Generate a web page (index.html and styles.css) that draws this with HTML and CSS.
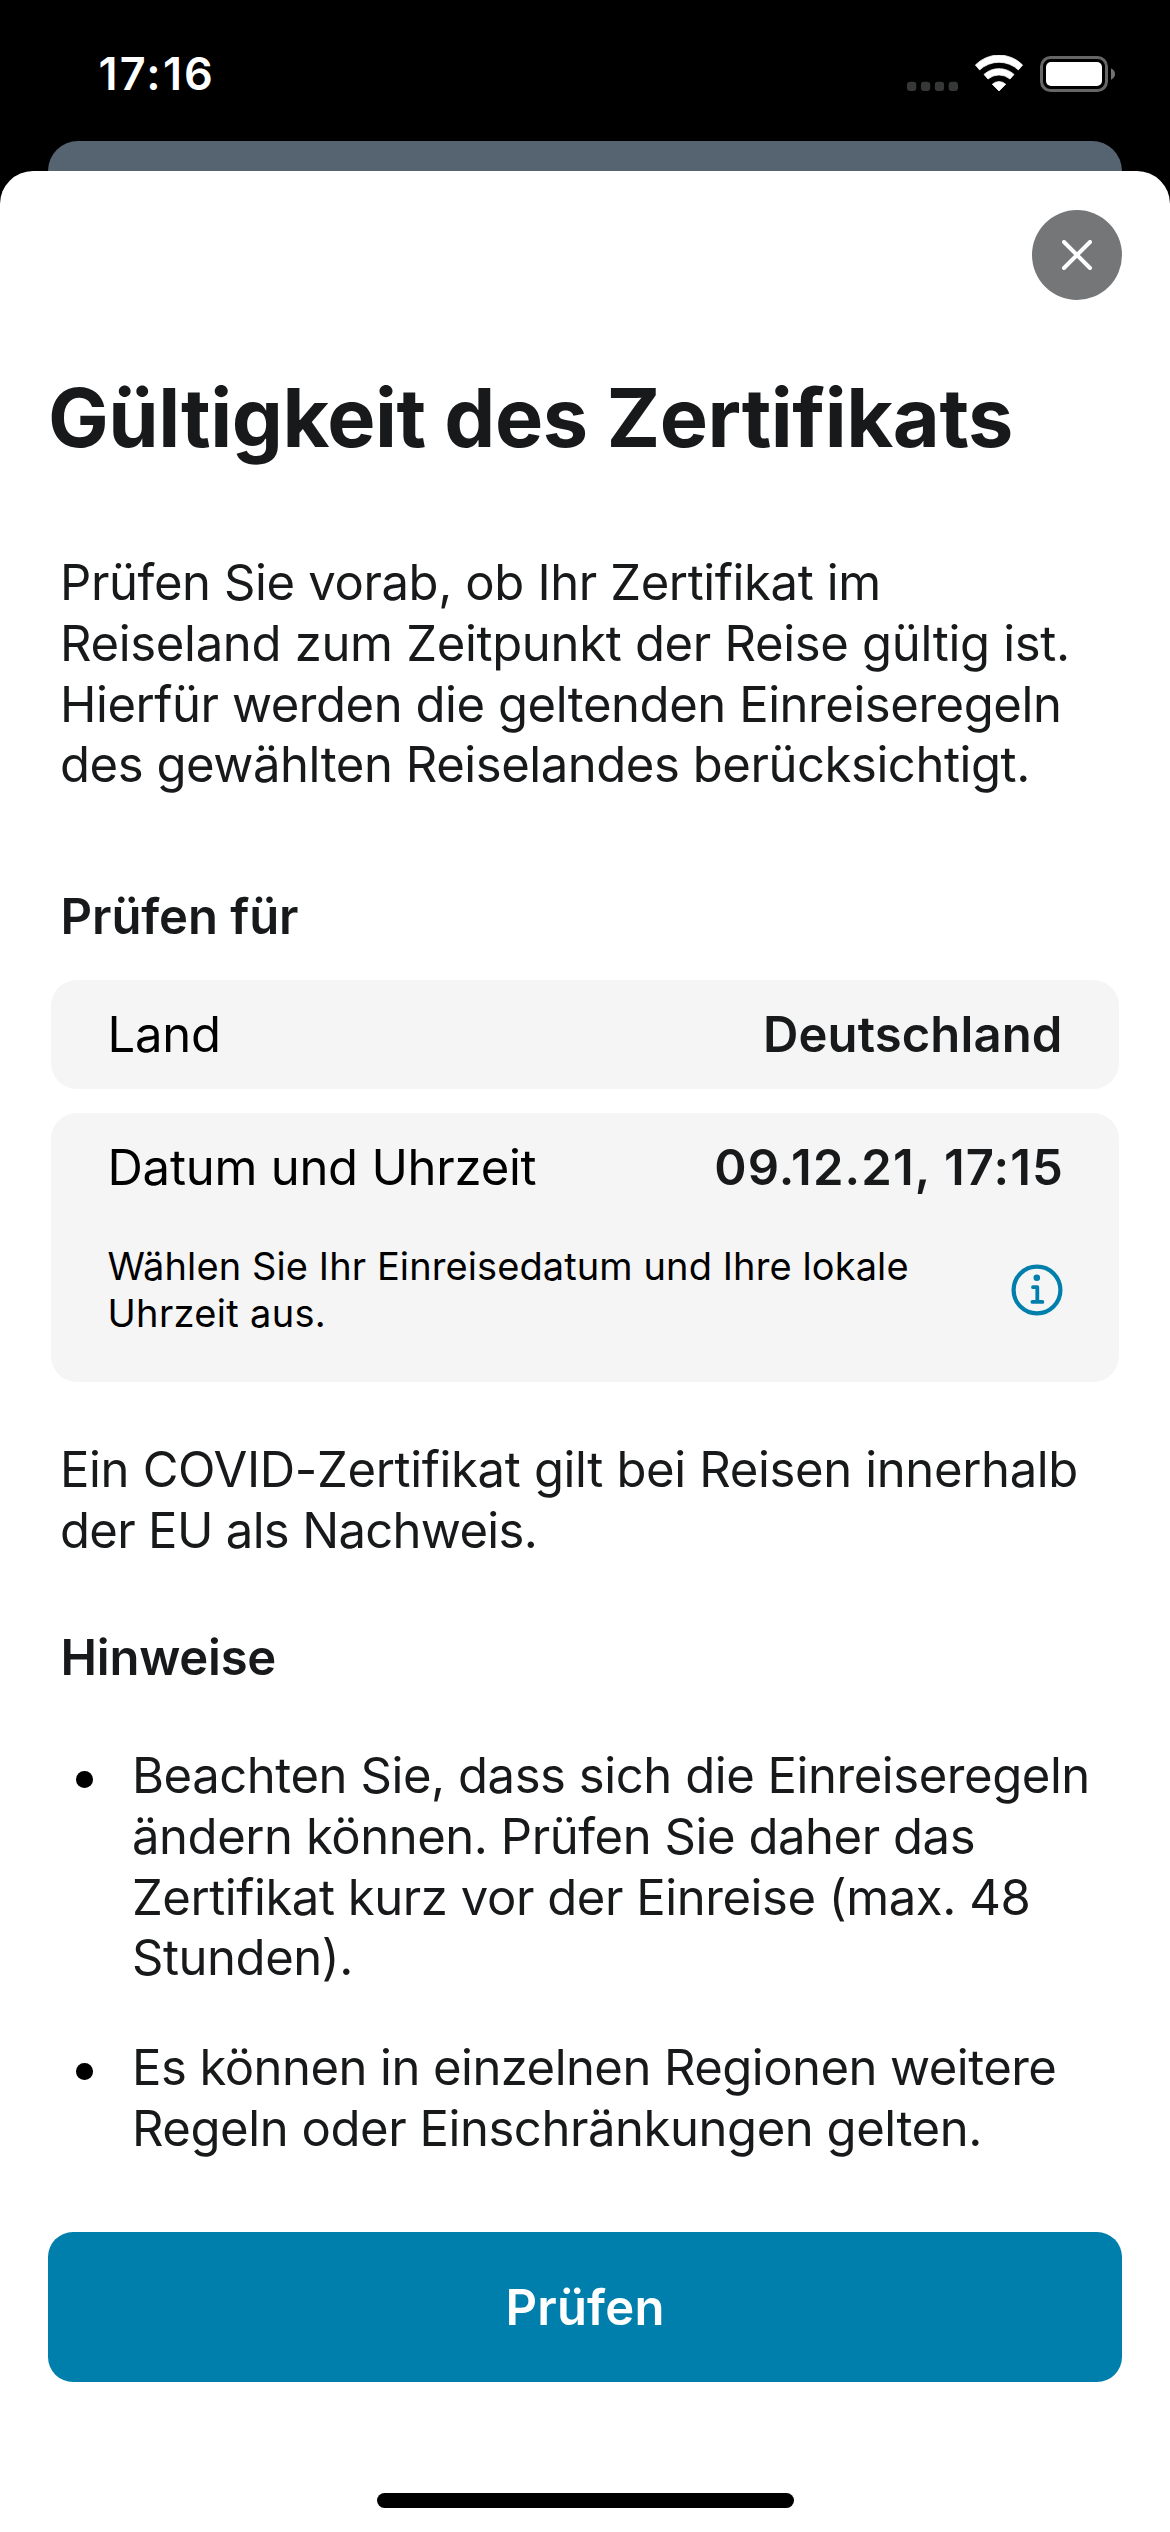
FILE: index.html
```html
<!DOCTYPE html>
<html lang="de">
<head>
  <meta charset="utf-8">
  <title>Gültigkeit des Zertifikats</title>
  <link rel="stylesheet" href="styles.css">
</head>
<body>
  <header class="status-bar">
    <span class="time">17:16</span>
    <div class="indicators">
      <svg class="cellular" viewBox="907 55 51 38" aria-hidden="true">
        <rect x="907" y="81.7" width="9.3" height="9.3" rx="3"/>
        <rect x="920.9" y="81.7" width="9.3" height="9.3" rx="3"/>
        <rect x="934.8" y="81.7" width="9.3" height="9.3" rx="3"/>
        <rect x="948.7" y="81.7" width="9.3" height="9.3" rx="3"/>
      </svg>
      <svg class="wifi" viewBox="974 55 50 38" aria-hidden="true">
        <path d="M975.4 65A33 33 0 0 1 1022.6 65L1018.4 69.9A28.5 28.5 0 0 0 979.6 69.9Z"/>
        <path d="M984 74.4A22.5 22.5 0 0 1 1014 74.4L1010 79A17 17 0 0 0 988 79Z"/>
        <path d="M992.3 84.2A10 10 0 0 1 1005.7 84.2L999 91Z"/>
      </svg>
      <svg class="battery" viewBox="1040 55 75 38" aria-hidden="true">
        <rect class="battery-case" x="1041.5" y="57.5" width="65" height="33" rx="9"/>
        <rect class="battery-level" x="1046" y="62" width="56" height="24" rx="5"/>
        <path class="battery-cap" d="M1111 68.3Q1115 70.5 1115 74Q1115 77.5 1111 79.7Z"/>
      </svg>
    </div>
  </header>

  <div class="back-sheet"></div>

  <main class="sheet">
    <div class="toolbar">
      <button class="close" aria-label="Schließen">
        <svg viewBox="0 0 30 30" aria-hidden="true"><path d="M2 2L28 28M28 2L2 28"/></svg>
      </button>
    </div>

    <h1 class="title">Gültigkeit des Zertifikats</h1>

    <p class="copy intro">
      <span class="line">Prüfen Sie vorab, ob Ihr Zertifikat im</span>
      <span class="line">Reiseland zum Zeitpunkt der Reise gültig ist.</span>
      <span class="line">Hierfür werden die geltenden Einreiseregeln</span>
      <span class="line">des gewählten Reiselandes berücksichtigt.</span>
    </p>

    <h2 class="heading heading-check">Prüfen für</h2>

    <section class="cards">
      <div class="card">
        <div class="row">
          <span class="label">Land</span>
          <span class="value country">Deutschland</span>
        </div>
      </div>
      <div class="card card-date">
        <div class="row">
          <span class="label">Datum und Uhrzeit</span>
          <span class="value date">09.12.21, 17:15</span>
        </div>
        <div class="hint">
          <p class="hint-text">
            <span class="line">Wählen Sie Ihr Einreisedatum und Ihre lokale</span>
            <span class="line">Uhrzeit aus.</span>
          </p>
          <svg class="info" viewBox="0 0 52 52" aria-hidden="true">
            <circle class="info-ring" cx="26" cy="26" r="23.4"/>
            <circle class="info-dot" cx="25.8" cy="13.8" r="3.3"/>
            <path class="info-stem" d="M22 23.2H26.3V37.8M21.4 37.9H31.4"/>
          </svg>
        </div>
      </div>
    </section>

    <p class="copy covid">
      <span class="line">Ein COVID-Zertifikat gilt bei Reisen innerhalb</span>
      <span class="line">der EU als Nachweis.</span>
    </p>

    <h2 class="heading heading-notes">Hinweise</h2>

    <ul class="notes">
      <li class="note">
        <span class="bullet"></span>
        <p class="copy">
          <span class="line">Beachten Sie, dass sich die Einreiseregeln</span>
          <span class="line">ändern können. Prüfen Sie daher das</span>
          <span class="line">Zertifikat kurz vor der Einreise (max. 48</span>
          <span class="line">Stunden).</span>
        </p>
      </li>
      <li class="note">
        <span class="bullet"></span>
        <p class="copy">
          <span class="line">Es können in einzelnen Regionen weitere</span>
          <span class="line">Regeln oder Einschränkungen gelten.</span>
        </p>
      </li>
    </ul>

    <button class="submit">Prüfen</button>
    <div class="home-indicator"></div>
  </main>
</body>
</html>
```
FILE: styles.css
```css
* {
  box-sizing: border-box;
  margin: 0;
  padding: 0;
}

body {
  width: 1170px;
  height: 2532px;
  overflow: hidden;
  background: #000;
  color: #17191a;
  font-family: Inter, "Liberation Sans", sans-serif;
  font-size: 49px;
  font-variant-ligatures: none;
}

button {
  border: 0;
  font: inherit;
}

/* Status bar */
.status-bar {
  display: flex;
  justify-content: space-between;
  align-items: flex-start;
  height: 141px;
  padding: 44px 55px 0 98.5px;
}

.time {
  color: #fff;
  font-size: 45px;
  font-weight: 600;
  line-height: 60px;
  letter-spacing: 2.2px;
}

.indicators {
  display: flex;
  gap: 16px;
  padding-top: 11px;
}

.indicators svg {
  display: block;
  height: 38px;
}

.cellular {
  width: 51px;
  fill: #363838;
}

.wifi {
  width: 50px;
  fill: #fff;
  stroke: #fff;
  stroke-width: 0.8;
  stroke-linejoin: round;
}

.battery {
  width: 75px;
}

.battery-case {
  fill: none;
  stroke: #666;
  stroke-width: 3;
}

.battery-level {
  fill: #fff;
}

.battery-cap {
  fill: #737373;
}

/* Sheets */
.back-sheet {
  height: 30px;
  margin: 0 48px;
  border-radius: 30px 30px 0 0;
  background: #566370;
}

.sheet {
  display: flex;
  flex-direction: column;
  height: 2361px;
  padding: 39px 48px 0;
  border-radius: 33px 33px 0 0;
  background: #fff;
}

.toolbar {
  display: flex;
  justify-content: flex-end;
}

.close {
  display: flex;
  justify-content: center;
  align-items: center;
  width: 90px;
  height: 90px;
  border-radius: 50%;
  background: #757678;
}

.close svg {
  width: 30px;
  height: 30px;
  fill: none;
  stroke: #fff;
  stroke-width: 4;
  stroke-linecap: round;
}

/* Text */
.title {
  margin-top: 67.5px;
  font-size: 81px;
  font-weight: 700;
  line-height: 100px;
  letter-spacing: -0.455px;
  white-space: nowrap;
}

.line {
  display: block;
  white-space: nowrap;
}

.copy {
  line-height: 60.86px;
  letter-spacing: -0.44px;
}

.intro {
  margin: 85.3px 12px 0;
}

.intro .line:nth-child(1) {
  letter-spacing: -0.38px;
}

.intro .line:nth-child(2) {
  letter-spacing: -0.314px;
}

.heading {
  margin-left: 12.5px;
  font-size: 49px;
  font-weight: 600;
  line-height: 60px;
}

.heading-check {
  margin-top: 91.1px;
  letter-spacing: -0.08px;
}

.heading-notes {
  margin-top: 66.3px;
  letter-spacing: -0.23px;
}

/* Cards */
.cards {
  display: flex;
  flex-direction: column;
  gap: 24px;
  margin: 32.7px 3px 0;
}

.card {
  padding: 0 56.5px;
  border-radius: 26px;
  background: #f5f5f5;
}

.card-date {
  height: 269px;
}

.row {
  display: flex;
  justify-content: space-between;
  align-items: center;
  height: 109px;
}

.label {
  color: #000;
  letter-spacing: -0.24px;
}

.value {
  font-weight: 600;
}

.country {
  letter-spacing: 0.12px;
}

.date {
  margin-right: -1.5px;
  letter-spacing: 1.11px;
}

.hint {
  display: flex;
  justify-content: space-between;
  align-items: center;
  margin-top: 21.4px;
}

.hint-text {
  color: #000;
  font-size: 38px;
  line-height: 46.5px;
  letter-spacing: 0.1px;
}

.hint-text .line:nth-child(2) {
  letter-spacing: 0.32px;
}

.info {
  width: 52px;
  height: 52px;
  fill: none;
  stroke: #007fad;
  stroke-width: 4.2;
}

.info-dot {
  fill: #007fad;
  stroke: none;
}

.info-stem {
  stroke-width: 3.8;
  stroke-linecap: round;
  stroke-linejoin: round;
}

.covid {
  margin: 57.8px 12px 0;
}

.covid .line:nth-child(1) {
  letter-spacing: -0.35px;
}

.covid .line:nth-child(2) {
  letter-spacing: -0.67px;
}

/* Notes */
.notes {
  display: flex;
  flex-direction: column;
  gap: 48.6px;
  margin: 58px 0 0 28.4px;
  list-style: none;
}

.note {
  display: flex;
  gap: 39.1px;
}

.bullet {
  flex: none;
  width: 16.5px;
  height: 16.5px;
  margin-top: 25.2px;
  border-radius: 50%;
  background: #000;
}

.note:nth-child(2) .line:nth-child(1) {
  letter-spacing: -0.54px;
}

/* Footer */
.submit {
  flex: none;
  height: 150px;
  margin-top: 72.5px;
  padding-top: 1px;
  border-radius: 25px;
  background: #007fad;
  color: #fff;
  font-weight: 600;
  letter-spacing: 0.22px;
}

.home-indicator {
  align-self: center;
  width: 417px;
  height: 15px;
  margin-top: 111px;
  border-radius: 8px;
  background: #000;
}
```
